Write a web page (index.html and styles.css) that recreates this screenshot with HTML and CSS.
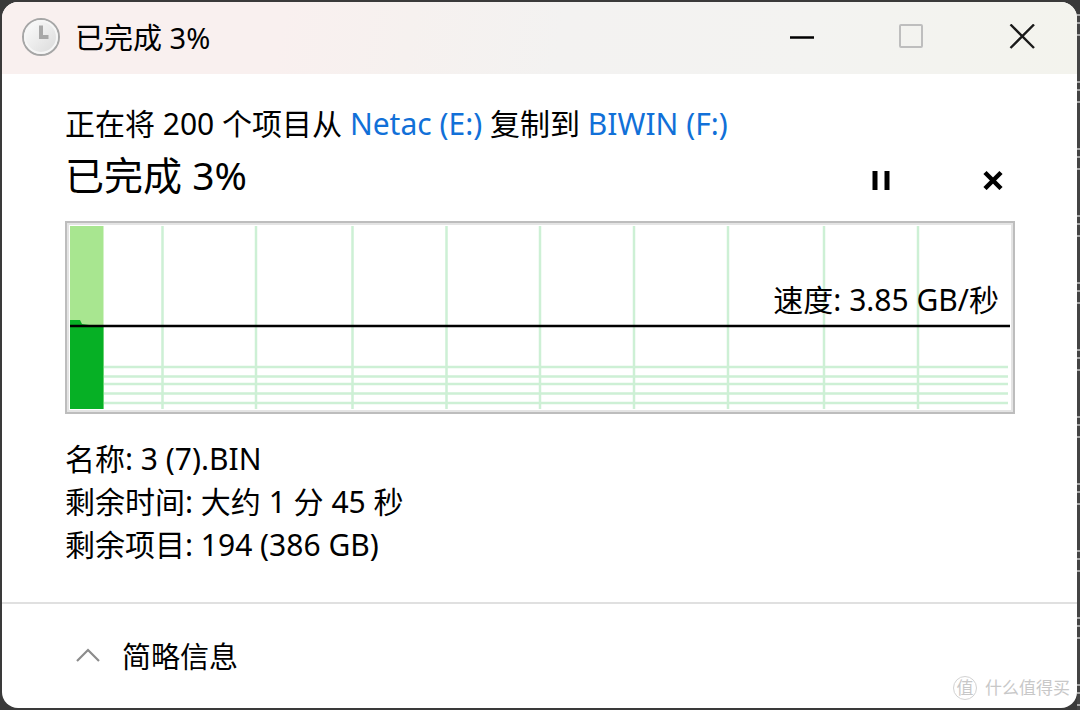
FILE: index.html
```html
<!DOCTYPE html>
<html lang="zh-CN">
<head>
    <meta charset="UTF-8">
    <meta name="viewport" content="width=device-width, initial-scale=1.0">
    <title>已完成 3%</title>
    <link rel="stylesheet" href="styles.css">
</head>
<body>

    <div class="window">
        <header class="titlebar">
            <svg class="clock" viewBox="0 0 40 40" aria-hidden="true">
                <defs>
                    <linearGradient id="clockFace" x1="0" y1="0" x2="1" y2="1">
                        <stop offset="0" stop-color="#ffffff"/>
                        <stop offset="1" stop-color="#d8d8d8"/>
                    </linearGradient>
                </defs>
                <circle cx="20" cy="20" r="18" fill="url(#clockFace)" stroke="#a6a6a6" stroke-width="2"/>
                <circle cx="20" cy="20" r="16" fill="none" stroke="#f6f6f6" stroke-width="2"/>
                <path d="M20 8.500V20H27.500" fill="none" stroke="#a8a8a8" stroke-width="4"/>
            </svg>
            <span class="title">已完成 3%</span>
            <button class="win-btn" aria-label="最小化">
                <svg width="26" height="26" viewBox="0 0 26 26"><path d="M1 13.500H25" stroke="#000" stroke-width="2.500"/></svg>
            </button>
            <button class="win-btn" aria-label="最大化" disabled>
                <svg width="26" height="26" viewBox="0 0 26 26"><rect x="1" y="1" width="22" height="22" rx="1" fill="none" stroke="#bebebe" stroke-width="2"/></svg>
            </button>
            <button class="win-btn" aria-label="关闭">
                <svg width="26" height="26" viewBox="0 0 26 26"><path d="M1.500 .500L25 24M25 .500L1.500 24" stroke="#1a1a1a" stroke-width="2.400"/></svg>
            </button>
        </header>

        <main class="content">
            <p class="summary">正在将 200 个项目从 <a href="#">Netac (E:)</a> 复制到 <a href="#">BIWIN (F:)</a></p>

            <div class="progress-row">
                <h1>已完成 3%</h1>
                <button class="action-btn" aria-label="暂停">
                    <svg width="20" height="20" viewBox="0 0 20 20"><path d="M1.500 1H6.500V20H1.500zM13.500 1H18.500V20H13.500z"/></svg>
                </button>
                <button class="action-btn" aria-label="取消">
                    <svg width="20" height="20" viewBox="0 0 20 20"><path d="M2 2.500L18 18.500M18 2.500L2 18.500" stroke="#000" stroke-width="4.500"/></svg>
                </button>
            </div>

            <div class="chart">
                <svg class="graph" viewBox="0 0 940 183" preserveAspectRatio="none" aria-hidden="true">
                    <path class="grid" d="M92.500 0V183M186 0V183M282.500 0V183M376.500 0V183M470 0V183M564 0V183M658 0V183M754 0V183M848 0V183"/>
                    <path class="grid" d="M34 141H938M34 150.500H938M34 158H938M34 167.500H938M34 177H938"/>
                    <rect class="done" width="33.500" height="183"/>
                    <path class="speed-area" d="M0 94H10L12 98L33.500 101V183H0z"/>
                    <path class="speed-line" d="M0 100H940"/>
                </svg>
                <span class="speed">速度: 3.85 GB/秒</span>
            </div>

            <div class="details">
                <p>名称: 3 (7).BIN</p>
                <p>剩余时间: 大约 1 分 45 秒</p>
                <p>剩余项目: 194 (386 GB)</p>
            </div>
        </main>

        <footer class="footer">
            <button class="toggle">
                <svg width="26" height="16" viewBox="0 0 26 16"><path d="M2 13L13 2L24 13" fill="none" stroke="#8c8c8c" stroke-width="2.200"/></svg>
                简略信息
            </button>
        </footer>

        <div class="watermark"><span class="badge">值</span>什么值得买</div>
    </div>

</body>
</html>
```
FILE: styles.css
```css
* {
    box-sizing: border-box;
}
body {
    margin: 0;
    padding: 2px 3px 2px 2px;
    min-height: 100vh;
    display: flex;
    background: #3a3a3a;
    font-family: "Noto Sans", "Noto Sans CJK SC", sans-serif;
    font-size: 30px;
    line-height: 43px;
    color: #000;
}
/* fond visible à droite de la fenêtre */
body::after {
    content: "";
    position: absolute;
    top: 14px;
    right: 0;
    bottom: 0;
    width: 3px;
    background: repeating-linear-gradient(#a8a8a8 0 2px, #444 2px 8px, #a8a8a8 8px 10px, #444 10px 20px, #a8a8a8 20px 22px, #444 22px 67px);
}
p, h1 {
    margin: 0;
}
button {
    padding: 0;
    border: none;
    background: none;
    font: inherit;
    color: inherit;
}
.window {
    position: relative;
    flex: 1;
    display: flex;
    flex-direction: column;
    background: #fff;
    border-radius: 16px;
    overflow: hidden;
}
/* barre de titre */
.titlebar {
    display: flex;
    align-items: center;
    height: 72px;
    padding: 0 0 2px 19px;
    background: linear-gradient(100deg, #f9f0ef 0%, #f9f0ef 26%, #f6f1ef 38%, #f3f2f1 52%, #f3f3f1 75%, #f3f3ed 100%);
}
.clock {
    width: 40px;
    height: 40px;
    margin-right: 14px;
}
.title {
    flex: 1;
    font-size: 29px;
}
.win-btn {
    display: flex;
    align-items: center;
    justify-content: center;
    width: 110px;
    height: 70px;
}
.content {
    flex: 1;
    padding: 28px 62px 0 63px;
}
a {
    color: #1170d8;
    text-decoration: none;
}
.progress-row {
    display: flex;
    align-items: flex-end;
    height: 60px;
    margin-bottom: 16px;
}
h1 {
    flex: 1;
    font-size: 39px;
    font-weight: normal;
    line-height: 60px;
}
.action-btn {
    display: flex;
    align-items: center;
    justify-content: center;
    width: 44px;
    height: 50px;
    margin-left: 68px;
}
/* graphique */
.chart {
    position: relative;
    border: 2px solid #bdbdbd;
    outline: 2px solid #e4e4e4;
    outline-offset: -4px;
    padding: 3px;
}
.graph {
    display: block;
    width: 100%;
    height: 183px;
}
.grid {
    fill: none;
    stroke: #cdf0d5;
    stroke-width: 2.5;
}
.done {
    fill: #a8e690;
}
.speed-area {
    fill: #06b025;
}
.speed-line {
    stroke: #000;
    stroke-width: 2.5;
}
.speed {
    position: absolute;
    right: 14px;
    top: 55px;
}
.details {
    padding-top: 23px;
}
.footer {
    display: flex;
    align-items: center;
    height: 106px;
    padding-left: 73px;
    border-top: 2px solid #e0e0e0;
    font-size: 29px;
}
.toggle {
    display: flex;
    align-items: center;
    gap: 21px;
}
.watermark {
    position: absolute;
    right: 7px;
    bottom: 8px;
    display: flex;
    align-items: center;
    gap: 8px;
    font-size: 17px;
    line-height: 24px;
    color: #c8c8c8;
}
.badge {
    width: 24px;
    height: 24px;
    border: 1px solid #d2d2d2;
    border-radius: 50%;
    line-height: 22px;
    text-align: center;
}
```
